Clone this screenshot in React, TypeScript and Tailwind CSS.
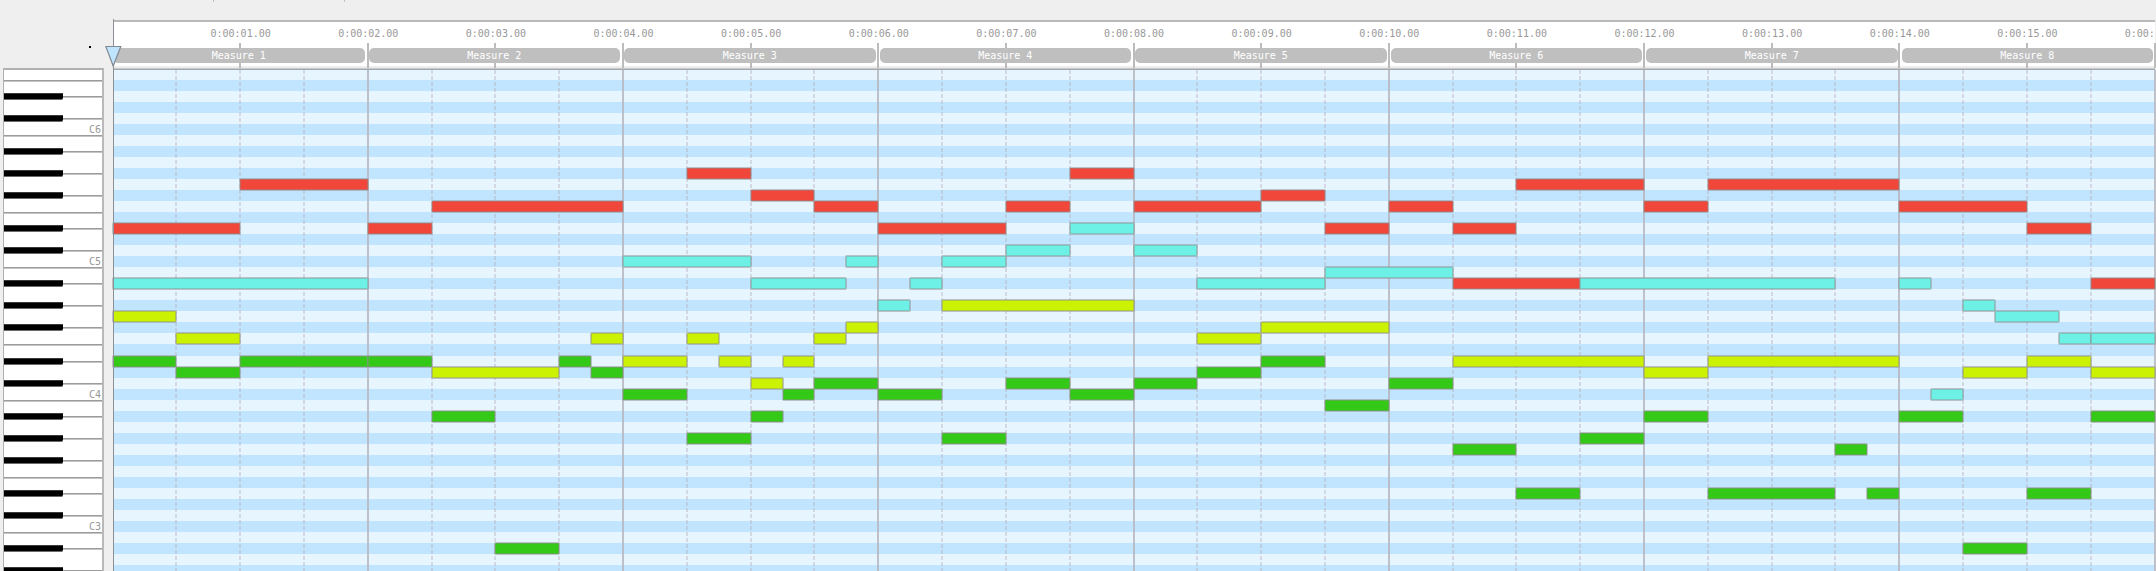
type Voice = "red" | "cyan" | "yellow" | "green";
type Note = [voice: Voice, row: number, start: number, end: number];

const ROW = 11;
const STEPS = 64;
const TALL_ROW = 25;

const VOICE_CLASS: Record<Voice, string> = {
  red: "bg-[#f1463a]",
  cyan: "bg-[#6df0e6]",
  yellow: "bg-[#cbf103]",
  green: "bg-[#34c917]",
};

// Start and end are in sixteenths, eight to a measure.
const NOTES: Note[] = [
  ["red", 14, 0, 4], ["red", 10, 4, 8], ["cyan", 19, 0, 8], ["yellow", 22, 0, 2],
  ["yellow", 24, 2, 4], ["green", 26, 0, 2], ["green", 27, 2, 4], ["green", 26, 4, 8],

  ["red", 14, 8, 10], ["red", 12, 10, 16], ["green", 26, 8, 10], ["yellow", 27, 10, 14],
  ["green", 26, 14, 15], ["yellow", 24, 15, 16], ["green", 27, 15, 16],
  ["green", 31, 10, 12], ["green", 43, 12, 14],

  ["cyan", 17, 16, 20], ["red", 9, 18, 20], ["red", 11, 20, 22], ["red", 12, 22, 24],
  ["cyan", 19, 20, 23], ["cyan", 17, 23, 24], ["yellow", 26, 16, 18], ["yellow", 24, 18, 19],
  ["yellow", 26, 19, 20], ["yellow", 28, 20, 21], ["yellow", 26, 21, 22],
  ["yellow", 24, 22, 23], ["yellow", 23, 23, 24], ["green", 29, 16, 18],
  ["green", 33, 18, 20], ["green", 31, 20, 21], ["green", 29, 21, 22], ["green", 28, 22, 24],

  ["red", 14, 24, 28], ["red", 12, 28, 30], ["red", 9, 30, 32], ["cyan", 21, 24, 25],
  ["cyan", 19, 25, 26], ["cyan", 17, 26, 28], ["cyan", 16, 28, 30], ["cyan", 14, 30, 32],
  ["yellow", 21, 26, 32], ["green", 29, 24, 26], ["green", 33, 26, 28],
  ["green", 28, 28, 30], ["green", 29, 30, 32],

  ["red", 12, 32, 36], ["red", 11, 36, 38], ["red", 14, 38, 40], ["cyan", 16, 32, 34],
  ["cyan", 19, 34, 38], ["cyan", 18, 38, 42], ["yellow", 24, 34, 36],
  ["yellow", 23, 36, 40], ["green", 28, 32, 34], ["green", 27, 34, 36],
  ["green", 26, 36, 38], ["green", 30, 38, 40],

  ["red", 12, 40, 42], ["red", 14, 42, 44], ["red", 10, 44, 48], ["red", 19, 42, 46],
  ["cyan", 19, 46, 54], ["yellow", 26, 42, 48], ["green", 28, 40, 42],
  ["green", 34, 42, 44], ["green", 38, 44, 46], ["green", 33, 46, 48],

  ["red", 12, 48, 50], ["red", 10, 50, 56], ["yellow", 27, 48, 50], ["yellow", 26, 50, 56],
  ["green", 31, 48, 50], ["green", 38, 50, 54], ["green", 34, 54, 55], ["green", 38, 55, 56],

  ["red", 12, 56, 60], ["red", 14, 60, 62], ["red", 19, 62, 64], ["cyan", 19, 56, 57],
  ["cyan", 29, 57, 58], ["cyan", 21, 58, 59], ["cyan", 22, 59, 61], ["cyan", 24, 61, 62],
  ["cyan", 24, 62, 64], ["yellow", 27, 58, 60], ["yellow", 26, 60, 62],
  ["yellow", 27, 62, 64], ["green", 31, 56, 58], ["green", 43, 58, 60],
  ["green", 38, 60, 62], ["green", 31, 62, 64],
];

// Each key: height in pixels, whether a black key sits on its lower edge, label.
const KEYS: [height: number, black: boolean, label?: string][] = [
  [11, false],
  [16, true], [22, true], [17, false, "C6"],
  [16, true], [22, true], [22, true], [17, false],
  [16, true], [22, true], [17, false, "C5"],
  [16, true], [22, true], [22, true], [17, false],
  [17, true], [22, true], [17, false, "C4"],
  [16, true], [22, true], [22, true], [17, false],
  [16, true], [22, true], [17, false, "C3"],
  [16, true], [22, true], [22, true],
];

const snap = (step: number) => `round(down, ${(step / STEPS) * 100}%, 1px)`;
const rowTop = (row: number) => row * ROW + (row > TALL_ROW ? 1 : 0);
const range = (n: number) => Array.from({ length: n }, (_, i) => i);

function Keyboard() {
  return (
    <div className="w-[101px] shrink-0 self-start border-t-2 border-r-2 border-l border-t-[#b0b0b0] border-r-[#b9b9b9] border-l-[#b0b0b0] bg-white">
      {KEYS.map(([height, black, label], i) => (
        <div
          key={i}
          className="flex items-end border-b border-[#9c9c9c] pr-px shadow-[0_1px_0_#c4c4c4]"
          style={{ height }}
        >
          {label && <span className="ml-auto text-[10px] leading-[11px] text-[#989898]">{label}</span>}
          {black && (
            <span className="z-10 -mb-1 h-[7px] w-[59px] rounded-br-[2px] border-y border-[#6b6b6b] border-t-[#3a3a3a] bg-black" />
          )}
        </div>
      ))}
    </div>
  );
}

function TimeLabels() {
  return (
    <div className="flex h-[26px] pt-[6px]">
      <span className="min-w-0 flex-[0.5]" />
      {range(15).map((i) => (
        <time
          key={i}
          className="min-w-0 flex-1 text-center text-[10px] leading-[12px] whitespace-nowrap text-[#989898]"
        >
          {`0:00:${String(i + 1).padStart(2, "0")}.00`}
        </time>
      ))}
      <span className="flex min-w-0 flex-[0.5] justify-end">
        <time className="-mr-[30px] text-[10px] leading-[12px] whitespace-nowrap text-[#989898]">
          0:00:16.00
        </time>
      </span>
    </div>
  );
}

function Timeline() {
  return (
    <header className="relative border-t-2 border-[#b9b9b9] bg-white">
      {range(16).map((i) => (
        <span
          key={i}
          className="absolute top-[21px] bottom-0 -ml-px w-0.5 bg-[#bcbcbc]"
          style={{ left: snap((i + 1) * 4) }}
        />
      ))}
      <TimeLabels />
      <div className="relative flex gap-1 pr-0.5">
        {range(8).map((i) => (
          <div
            key={i}
            className="h-[15px] flex-1 rounded-[5px] bg-[#bfbfbf] text-center text-[10px] leading-[16px] text-white"
          >
            Measure {i + 1}
          </div>
        ))}
      </div>
      <div className="mt-[3px] h-[2px] bg-[#eeeeee]" />
    </header>
  );
}

function Roll() {
  return (
    <div className="relative border-t border-[#a3a8af]">
      {range(46).map((row) => (
        <div
          key={row}
          className={
            (row % 2 ? "bg-[#c1e5ff]" : "bg-[#e7f5ff]") +
            (row === TALL_ROW ? " h-[12px]" : row === 0 ? " h-[10px]" : " h-[11px]")
          }
        />
      ))}
      {range(32).map((i) => (
        <span
          key={i}
          className={
            (i + 1) % 4 === 0
              ? "absolute inset-y-0 -ml-px w-0.5 bg-[#b4b4bc]/80"
              : "absolute inset-y-0 -ml-px w-0.5 bg-[repeating-linear-gradient(to_bottom,#b4adb766_0px,#b4adb766_4px,transparent_4px,transparent_6px)]"
          }
          style={{ left: snap((i + 1) * 2) }}
        />
      ))}
      {NOTES.map(([voice, row, start, end]) => (
        <span
          key={`${voice}-${row}-${start}`}
          className={
            "absolute h-[11px] rounded-[1px] ring-1 ring-[#8f8f8f]/50 inset-ring-1 inset-ring-[#8f8f8f]/45 " +
            VOICE_CLASS[voice]
          }
          style={{
            top: rowTop(row) - 1,
            left: snap(start),
            width: `calc(${snap(end)} - ${snap(start)})`,
          }}
        />
      ))}
    </div>
  );
}

function Playhead() {
  return (
    <div className="absolute top-[19px] bottom-0 left-0 w-px bg-[#8b9096]">
      <svg
        className="absolute top-[26px] -left-2"
        width="17"
        height="23"
        viewBox="0 0 17 23"
        aria-hidden="true"
      >
        <path d="M0.8 1.5H15.8L8.2 21Z" fill="#bfe4ff" stroke="#84898f" strokeWidth="1.2" />
      </svg>
    </div>
  );
}

export default function App() {
  return (
    <main className="flex h-screen gap-[9px] overflow-hidden bg-[#efefef] pl-[3px] font-['DejaVu_Sans_Mono',monospace]">
      <span className="absolute top-[46px] left-[89px] h-[2px] w-[2px] bg-black" />
      <span className="absolute top-0 left-[213px] h-[2px] w-px bg-[#bdbdbd]" />
      <span className="absolute top-0 left-[344px] h-[2px] w-px bg-[#bdbdbd]" />
      <div className="flex shrink-0 pt-[68px]">
        <Keyboard />
      </div>
      <div className="relative min-w-0 flex-1 self-start pt-5 pr-px">
        <Timeline />
        <div className="h-px bg-[#c9c9c9]" />
        <Roll />
        <Playhead />
      </div>
    </main>
  );
}
